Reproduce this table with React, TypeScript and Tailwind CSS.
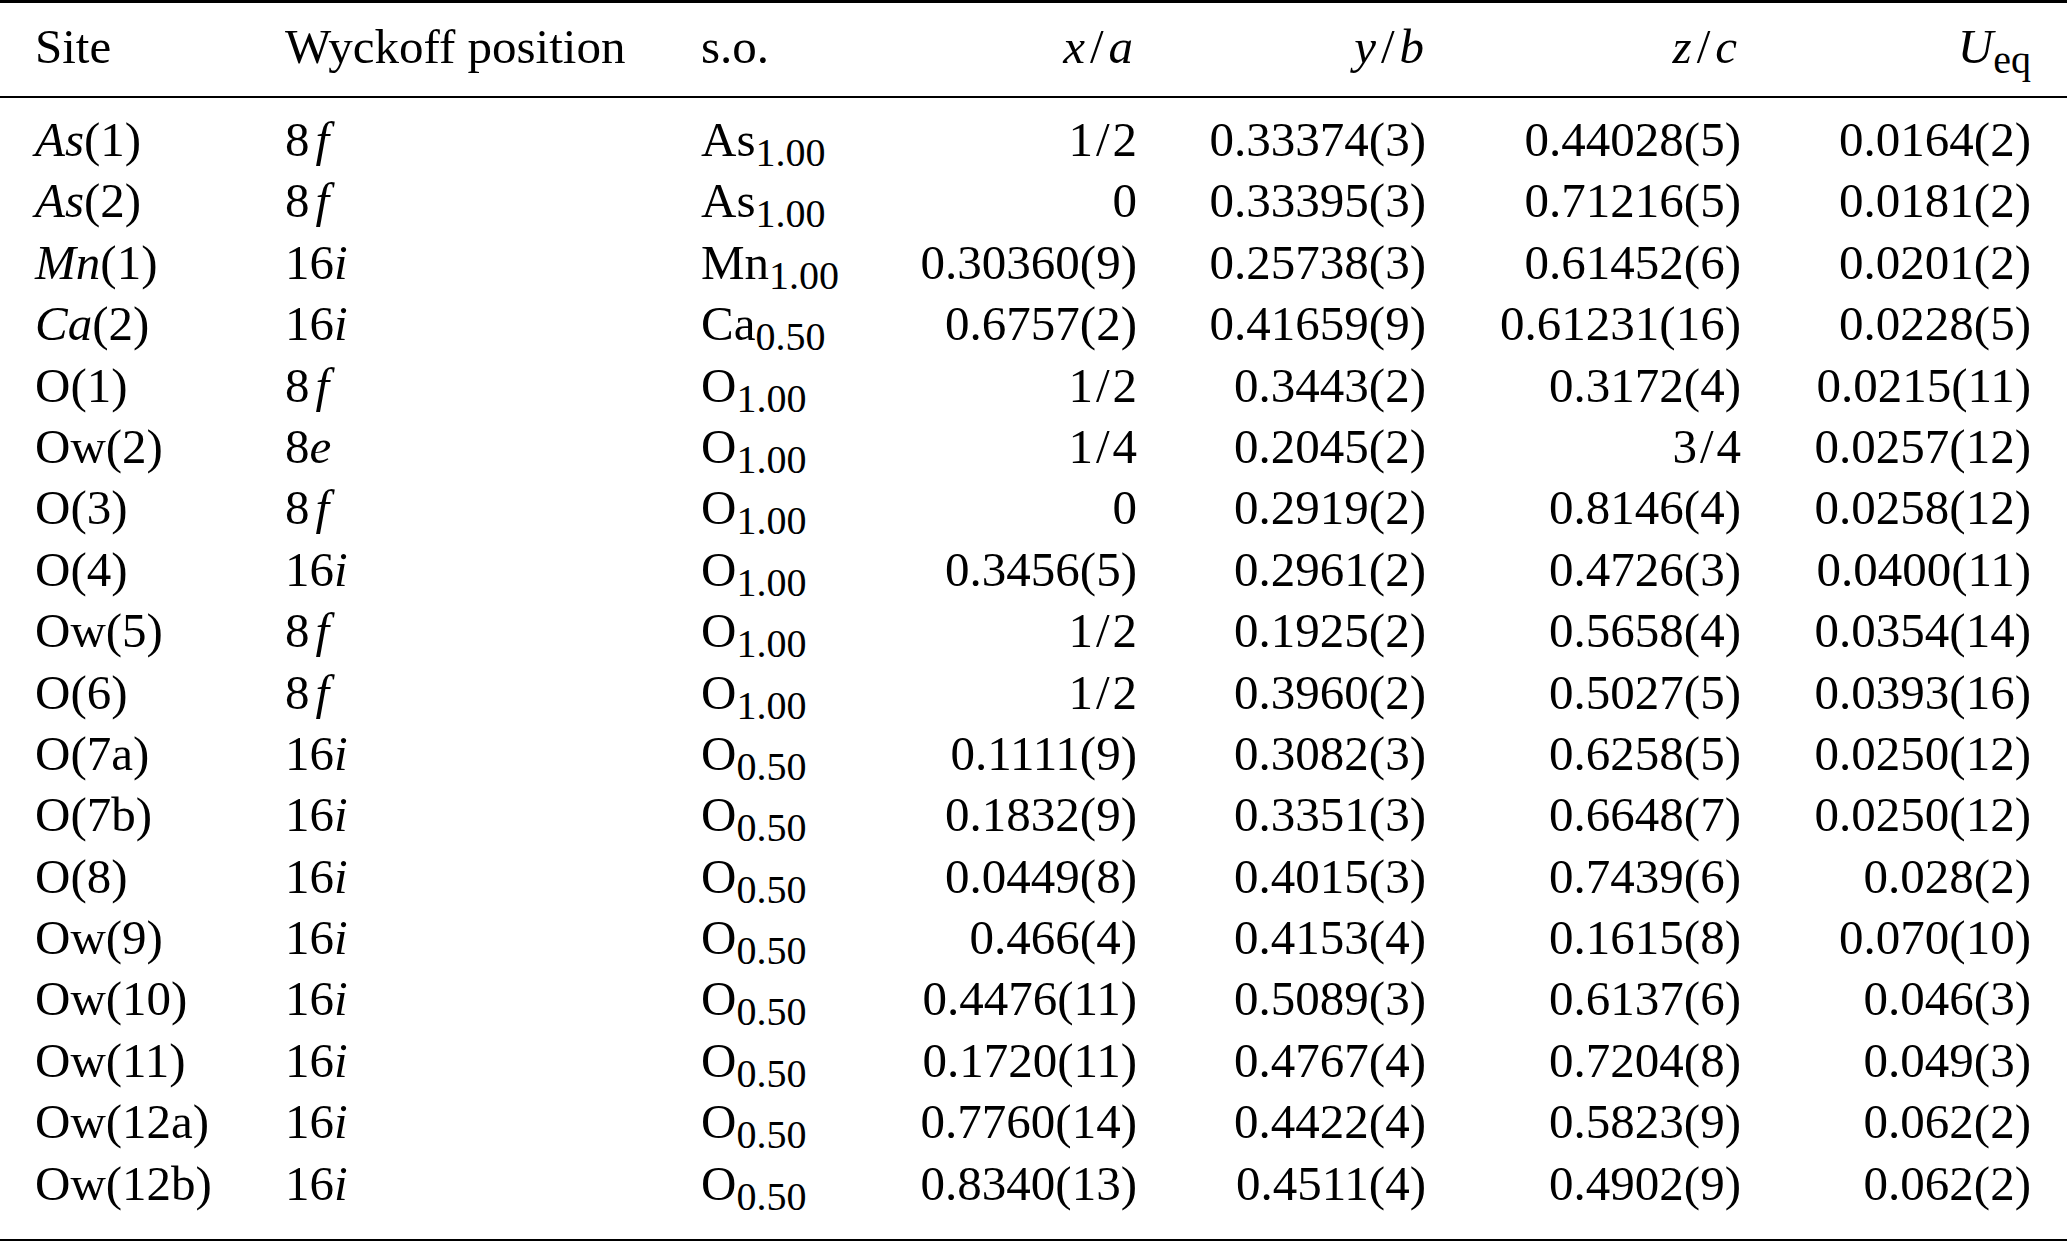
import React from "react";

type Row = {
  el: string;
  it: boolean;
  idx: string;
  wn: string;
  wl: string;
  so: string;
  occ: string;
  x: string;
  y: string;
  z: string;
  u: string;
};

const rows: Row[] = [
  { el: "As", it: true, idx: "(1)", wn: "8", wl: "f", so: "As", occ: "1.00", x: "1/2", y: "0.33374(3)", z: "0.44028(5)", u: "0.0164(2)" },
  { el: "As", it: true, idx: "(2)", wn: "8", wl: "f", so: "As", occ: "1.00", x: "0", y: "0.33395(3)", z: "0.71216(5)", u: "0.0181(2)" },
  { el: "Mn", it: true, idx: "(1)", wn: "16", wl: "i", so: "Mn", occ: "1.00", x: "0.30360(9)", y: "0.25738(3)", z: "0.61452(6)", u: "0.0201(2)" },
  { el: "Ca", it: true, idx: "(2)", wn: "16", wl: "i", so: "Ca", occ: "0.50", x: "0.6757(2)", y: "0.41659(9)", z: "0.61231(16)", u: "0.0228(5)" },
  { el: "O", it: false, idx: "(1)", wn: "8", wl: "f", so: "O", occ: "1.00", x: "1/2", y: "0.3443(2)", z: "0.3172(4)", u: "0.0215(11)" },
  { el: "Ow", it: false, idx: "(2)", wn: "8", wl: "e", so: "O", occ: "1.00", x: "1/4", y: "0.2045(2)", z: "3/4", u: "0.0257(12)" },
  { el: "O", it: false, idx: "(3)", wn: "8", wl: "f", so: "O", occ: "1.00", x: "0", y: "0.2919(2)", z: "0.8146(4)", u: "0.0258(12)" },
  { el: "O", it: false, idx: "(4)", wn: "16", wl: "i", so: "O", occ: "1.00", x: "0.3456(5)", y: "0.2961(2)", z: "0.4726(3)", u: "0.0400(11)" },
  { el: "Ow", it: false, idx: "(5)", wn: "8", wl: "f", so: "O", occ: "1.00", x: "1/2", y: "0.1925(2)", z: "0.5658(4)", u: "0.0354(14)" },
  { el: "O", it: false, idx: "(6)", wn: "8", wl: "f", so: "O", occ: "1.00", x: "1/2", y: "0.3960(2)", z: "0.5027(5)", u: "0.0393(16)" },
  { el: "O", it: false, idx: "(7a)", wn: "16", wl: "i", so: "O", occ: "0.50", x: "0.1111(9)", y: "0.3082(3)", z: "0.6258(5)", u: "0.0250(12)" },
  { el: "O", it: false, idx: "(7b)", wn: "16", wl: "i", so: "O", occ: "0.50", x: "0.1832(9)", y: "0.3351(3)", z: "0.6648(7)", u: "0.0250(12)" },
  { el: "O", it: false, idx: "(8)", wn: "16", wl: "i", so: "O", occ: "0.50", x: "0.0449(8)", y: "0.4015(3)", z: "0.7439(6)", u: "0.028(2)" },
  { el: "Ow", it: false, idx: "(9)", wn: "16", wl: "i", so: "O", occ: "0.50", x: "0.466(4)", y: "0.4153(4)", z: "0.1615(8)", u: "0.070(10)" },
  { el: "Ow", it: false, idx: "(10)", wn: "16", wl: "i", so: "O", occ: "0.50", x: "0.4476(11)", y: "0.5089(3)", z: "0.6137(6)", u: "0.046(3)" },
  { el: "Ow", it: false, idx: "(11)", wn: "16", wl: "i", so: "O", occ: "0.50", x: "0.1720(11)", y: "0.4767(4)", z: "0.7204(8)", u: "0.049(3)" },
  { el: "Ow", it: false, idx: "(12a)", wn: "16", wl: "i", so: "O", occ: "0.50", x: "0.7760(14)", y: "0.4422(4)", z: "0.5823(9)", u: "0.062(2)" },
  { el: "Ow", it: false, idx: "(12b)", wn: "16", wl: "i", so: "O", occ: "0.50", x: "0.8340(13)", y: "0.4511(4)", z: "0.4902(9)", u: "0.062(2)" },
];

const gridCols =
  "grid grid-cols-[250px_416px_200px_236px_289px_315px_290px] pl-[35px]";

function Num({ v }: { v: string }) {
  if (v.includes("/")) {
    const [a, b] = v.split("/");
    return (
      <span>
        {a}
        <span className="mx-[3px]">/</span>
        {b}
      </span>
    );
  }
  return <span>{v}</span>;
}

function Sub({ children }: { children: React.ReactNode }) {
  return (
    <span className="text-[40px] leading-none align-[-10px]">{children}</span>
  );
}

function Frac({ a, b }: { a: string; b: string }) {
  return (
    <span>
      <span className="italic">{a}</span>
      <span className="mx-[5px]">/</span>
      <span className="italic">{b}</span>
    </span>
  );
}

export default function App() {
  return (
    <div className="w-[2067px] h-[1241px] bg-white text-black font-['Liberation_Serif',serif] text-[49px] leading-[61.4px] overflow-hidden">
      <div className="border-t-[3px] border-b-2 border-black pt-[13px] pb-[16px]">
        <div className={gridCols}>
          <div>Site</div>
          <div>Wyckoff position</div>
          <div>s.o.</div>
          <div className="text-right pr-[4px]">
            <Frac a="x" b="a" />
          </div>
          <div className="text-right pr-[2px]">
            <Frac a="y" b="b" />
          </div>
          <div className="text-right pr-[4px]">
            <Frac a="z" b="c" />
          </div>
          <div className="text-right">
            <span className="italic">U</span>
            <Sub>eq</Sub>
          </div>
        </div>
      </div>
      <div className="border-b-[3px] border-black pt-[11px] pb-[25px]">
        {rows.map((r, i) => (
          <div key={i} className={`${gridCols} h-[61.4px]`}>
            <div>
              <span className={r.it ? "italic" : ""}>{r.el}</span>
              {r.idx}
            </div>
            <div>
              {r.wn}
              <span className={r.wl === "f" ? "italic ml-[6px]" : "italic"}>
                {r.wl}
              </span>
            </div>
            <div>
              {r.so}
              <Sub>{r.occ}</Sub>
            </div>
            <div className="text-right">
              <Num v={r.x} />
            </div>
            <div className="text-right">
              <Num v={r.y} />
            </div>
            <div className="text-right">
              <Num v={r.z} />
            </div>
            <div className="text-right">
              <Num v={r.u} />
            </div>
          </div>
        ))}
      </div>
    </div>
  );
}
